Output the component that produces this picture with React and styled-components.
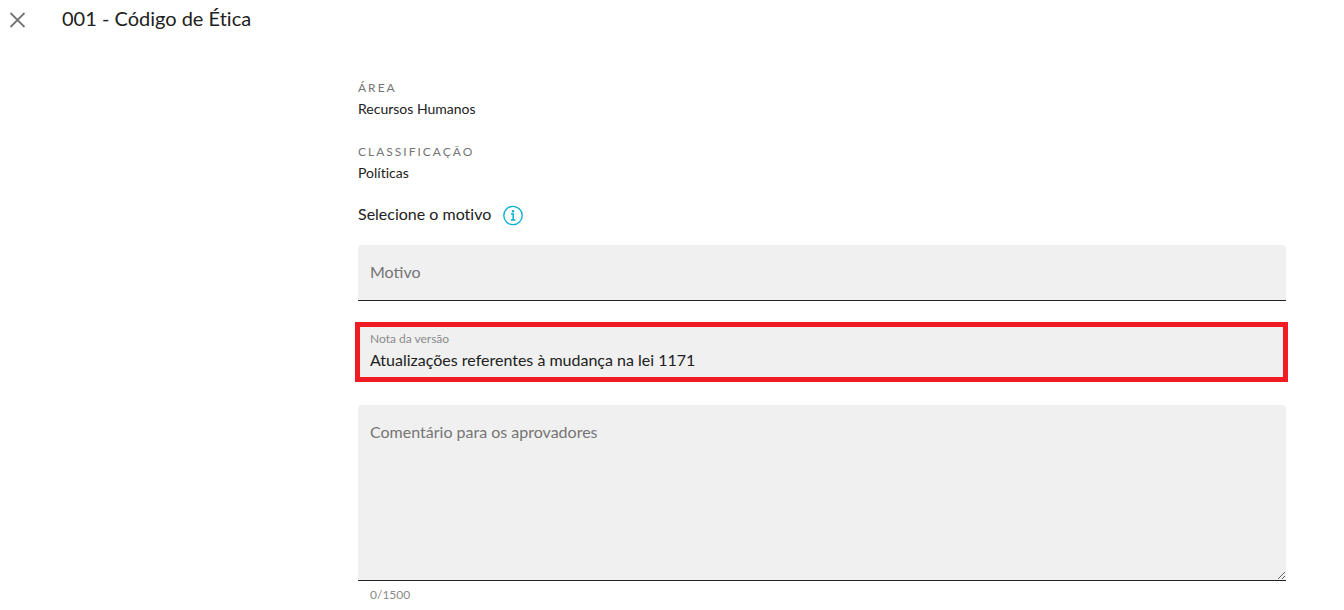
import React, { useState } from "react";
import styled, { createGlobalStyle } from "styled-components";

const MAX_LENGTH = 1500;

const GlobalStyle = createGlobalStyle`
  * {
    box-sizing: border-box;
  }
  body {
    margin: 0;
    background: #fff;
    color: #212121;
    font-family: Lato, sans-serif;
    font-size: 16px;
    font-variant-ligatures: none;
  }
`;

const Header = styled.header`
  display: flex;
  align-items: flex-start;
  gap: 32px;
  padding: 8px 5px;
`;
const CloseButton = styled.button`
  display: flex;
  padding: 0;
  border: 0;
  background: none;
  color: #757575;
  cursor: pointer;
`;
const Title = styled.h1`
  margin: 0;
  font-size: 20px;
  font-weight: 400;
  line-height: 20px;
`;
const Form = styled.form`
  display: flex;
  flex-direction: column;
  padding: 40px 58px 0 358px;
`;
const Details = styled.dl`
  display: grid;
  gap: 24px;
  margin: 0;
`;
const Term = styled.dt`
  color: #757575;
  font-size: 12px;
  line-height: 16px;
  letter-spacing: 2px;
  text-transform: uppercase;
`;
const Description = styled.dd`
  margin: 2px 0 0;
  font-size: 14px;
  line-height: 22px;
`;
const Reason = styled.div`
  display: flex;
  align-items: center;
  gap: 10px;
  margin: 18px 0 19px;
  line-height: 24px;
`;
const InfoButton = styled.button`
  display: flex;
  padding: 0;
  border: 0;
  background: none;
  color: #00b0d0;
  cursor: pointer;
`;
const Fields = styled.div`
  display: grid;
  gap: 24px;
`;
const Field = styled.div`
  position: relative;
  display: flex;
  border-bottom: 1px solid #212121;
  border-radius: 4px 4px 0 0;
  background: #f0f0f0;
  font-variant-ligatures: normal;
`;
/* red frame drawn over the field that needs attention */
const HighlightedField = styled(Field)`
  &::after {
    content: "";
    position: absolute;
    inset: -3px -2px -2px -3px;
    border: 5px solid #f01c24;
    pointer-events: none;
  }
`;
const Label = styled.label`
  position: absolute;
  top: ${p => (p.$floating ? "6px" : "15px")};
  left: 12px;
  color: ${p => (p.$floating ? "#8a8a8a" : "#757575")};
  font-size: ${p => (p.$floating ? "12px" : "16px")};
  line-height: ${p => (p.$floating ? "16px" : "24px")};
  pointer-events: none;
`;
const Input = styled.input`
  flex: 1;
  min-width: 0;
  height: 55px;
  padding: 14px 12px 0;
  border: 0;
  outline: 0;
  background: transparent;
  color: #212121;
  font: inherit;
`;
const TextArea = styled.textarea`
  flex: 1;
  min-width: 0;
  height: 175px;
  padding: 24px 12px 8px;
  border: 0;
  outline: 0;
  background: transparent;
  color: #212121;
  font: inherit;
  line-height: 24px;
  resize: vertical;
`;
const Counter = styled.p`
  margin: 6px 12px 0;
  color: #8a8a8a;
  font-size: 12px;
  line-height: 16px;
`;

const CloseIcon = () => (
  <svg width="25" height="24" viewBox="0 0 25 24" fill="none" aria-hidden="true">
    <path d="M5.5 5l14 14M19.5 5l-14 14" stroke="currentColor" strokeWidth="1.8" />
  </svg>
);

const InfoIcon = () => (
  <svg width="24" height="24" viewBox="0 0 24 24" fill="none" aria-hidden="true">
    <circle cx="12" cy="13.5" r="9.2" stroke="currentColor" strokeWidth="1.3" />
    <circle cx="12" cy="9.3" r="1.2" fill="currentColor" />
    <path d="M10 12h2.2v6M10 18h4.4" stroke="currentColor" strokeWidth="1.5" />
  </svg>
);

export default () => {
  const [reason, setReason] = useState("");
  const [note, setNote] = useState("Atualizações referentes à mudança na lei 1171");
  const [comment, setComment] = useState("");

  return (
    <>
      <GlobalStyle />
      <Header>
        <CloseButton type="button" aria-label="Fechar">
          <CloseIcon />
        </CloseButton>
        <Title>001 - Código de Ética</Title>
      </Header>
      <Form>
        <Details>
          <div>
            <Term>Área</Term>
            <Description>Recursos Humanos</Description>
          </div>
          <div>
            <Term>Classificação</Term>
            <Description>Políticas</Description>
          </div>
        </Details>
        <Reason>
          <span>Selecione o motivo</span>
          <InfoButton type="button" aria-label="Informações">
            <InfoIcon />
          </InfoButton>
        </Reason>
        <Fields>
          <Field>
            <Input id="reason" value={reason} onChange={e => setReason(e.target.value)} />
            <Label htmlFor="reason" $floating={reason !== ""}>
              Motivo
            </Label>
          </Field>
          <HighlightedField>
            <Input id="note" value={note} onChange={e => setNote(e.target.value)} />
            <Label htmlFor="note" $floating={note !== ""}>
              Nota da versão
            </Label>
          </HighlightedField>
          <Field>
            <TextArea
              id="comment"
              maxLength={MAX_LENGTH}
              value={comment}
              onChange={e => setComment(e.target.value)}
            />
            <Label htmlFor="comment" $floating={comment !== ""}>
              Comentário para os aprovadores
            </Label>
          </Field>
        </Fields>
        <Counter>
          {comment.length}/{MAX_LENGTH}
        </Counter>
      </Form>
    </>
  );
};
